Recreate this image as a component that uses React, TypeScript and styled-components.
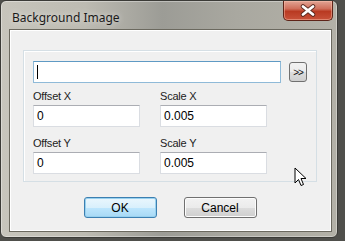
import React from 'react';
import styled, { createGlobalStyle } from 'styled-components';

const GlobalStyle = createGlobalStyle`
  html, body {
    margin: 0;
    padding: 0;
    background: #4f4f4b;
  }
`;

const Desktop = styled.div`
  position: relative;
  width: 345px;
  height: 241px;
  overflow: hidden;
  background: #4f4f4b;
`;

const Window = styled.div`
  display: flex;
  flex-direction: column;
  width: 338px;
  height: 238px;
  box-sizing: border-box;
  border: 1px solid #3b3b37;
  border-radius: 6px;
  background: linear-gradient(
    90deg,
    #c7c5bc 0%,
    #bdbbb2 25%,
    #9c9c96 48%,
    #a9a8a0 70%,
    #b3b1a7 100%
  );
  box-shadow: inset 0 0 0 1px rgba(255, 255, 255, 0.35);
`;

const TitleBar = styled.div`
  display: flex;
  justify-content: space-between;
  height: 30px;
  padding: 0 4px 0 11px;
`;

const Title = styled.span`
  align-self: center;
  margin-top: 2px;
  font-family: 'Noto Sans', sans-serif;
  font-size: 12px;
  color: #1a1a1a;
  text-shadow: 0 0 6px rgba(255, 255, 255, 0.7);
`;

const CloseButton = styled.div`
  display: flex;
  align-items: center;
  justify-content: center;
  width: 50px;
  height: 20px;
  box-sizing: border-box;
  border: 1px solid #5e2418;
  border-top: none;
  border-radius: 0 0 5px 5px;
  background: linear-gradient(180deg, #e2a494 0%, #d0705c 40%, #b93a22 55%, #c8523a 100%);
  box-shadow: inset 0 0 0 1px rgba(255, 200, 180, 0.45);
`;

const Body = styled.div`
  flex: 1;
  display: flex;
  padding: 0 7px 7px 10px;
`;

const Client = styled.div`
  flex: 1;
  display: flex;
  flex-direction: column;
  padding: 19px 13px 11px 12px;
  background: #f0f0f0;
  box-shadow: 0 0 0 1px #ffffff, 0 0 0 2px #6b695f;
`;

const Group = styled.div`
  height: 132px;
  box-sizing: border-box;
  padding: 10px 9px 7px 9px;
  border: 1px solid #d5dfe5;
  box-shadow: inset 1px 1px 0 #ffffff;
`;

const PathRow = styled.div`
  display: flex;
  align-items: center;
  gap: 8px;
`;

const TextBox = styled.div<{ $width: number; $focused?: boolean }>`
  display: flex;
  align-items: center;
  width: ${(p) => p.$width}px;
  height: 22px;
  box-sizing: border-box;
  padding-left: 3px;
  background: #ffffff;
  border: 1px solid ${(p) => (p.$focused ? '#8fbad8' : '#dadde2')};
  border-top-color: ${(p) => (p.$focused ? '#5f9ac4' : '#abadb3')};
  font-family: 'Liberation Sans', Arial, sans-serif;
  font-size: 12px;
  color: #000;
`;

const Caret = styled.span`
  width: 1px;
  height: 14px;
  background: #000;
`;

const Browse = styled.div`
  display: flex;
  align-items: center;
  justify-content: center;
  width: 18px;
  height: 20px;
  box-sizing: border-box;
  border: 1px solid #707070;
  border-radius: 3px;
  background: linear-gradient(180deg, #f2f2f2 0%, #ebebeb 50%, #dddddd 51%, #cfcfcf 100%);
  font-family: 'Liberation Sans', Arial, sans-serif;
  font-size: 10px;
  letter-spacing: -1px;
  color: #111;
`;

const Fields = styled.div`
  display: grid;
  grid-template-columns: 107px 107px;
  column-gap: 20px;
  row-gap: 10px;
  margin-top: 7px;
`;

const Field = styled.div`
  display: flex;
  flex-direction: column;
  gap: 2px;
`;

const Label = styled.span`
  height: 13px;
  line-height: 13px;
  font-family: 'Liberation Sans', Arial, sans-serif;
  font-size: 11px;
  letter-spacing: -0.2px;
  color: #222;
`;

const ButtonRow = styled.div`
  display: flex;
  justify-content: center;
  gap: 27px;
  margin-top: 15px;
`;

const Button = styled.div<{ $primary?: boolean }>`
  display: flex;
  align-items: center;
  justify-content: center;
  width: 73px;
  height: 21px;
  box-sizing: border-box;
  border: 1px solid ${(p) => (p.$primary ? '#3c7fb1' : '#707070')};
  border-radius: 3px;
  background: ${(p) =>
    p.$primary
      ? 'linear-gradient(180deg, #eaf6fd 0%, #d9f0fc 50%, #bee6fd 51%, #a7d9f5 100%)'
      : 'linear-gradient(180deg, #f2f2f2 0%, #ebebeb 50%, #dddddd 51%, #cfcfcf 100%)'};
  box-shadow: inset 0 0 0 1px ${(p) => (p.$primary ? '#98d1ef' : '#fcfcfc')};
  font-family: 'Liberation Sans', Arial, sans-serif;
  font-size: 12px;
  color: #000;
`;

const Pointer = styled.svg`
  position: absolute;
  left: 294px;
  top: 167px;
`;

const fields = [
  { label: 'Offset X', value: '0' },
  { label: 'Scale X', value: '0.005' },
  { label: 'Offset Y', value: '0' },
  { label: 'Scale Y', value: '0.005' },
];

export default function App() {
  return (
    <>
      <GlobalStyle />
      <Desktop>
        <Window>
          <TitleBar>
            <Title>Background Image</Title>
            <CloseButton>
              <svg width="18" height="13" viewBox="0 0 18 13">
                <path d="M4 2.5 L14 10.5 M14 2.5 L4 10.5" stroke="#5a2a20" strokeWidth="4.5" strokeLinecap="round" />
                <path d="M4 2.5 L14 10.5 M14 2.5 L4 10.5" stroke="#ffffff" strokeWidth="2.8" strokeLinecap="round" />
              </svg>
            </CloseButton>
          </TitleBar>
          <Body>
            <Client>
              <Group>
                <PathRow>
                  <TextBox $width={248} $focused>
                    <Caret />
                  </TextBox>
                  <Browse>&gt;&gt;</Browse>
                </PathRow>
                <Fields>
                  {fields.map((f) => (
                    <Field key={f.label}>
                      <Label>{f.label}</Label>
                      <TextBox $width={107}>{f.value}</TextBox>
                    </Field>
                  ))}
                </Fields>
              </Group>
              <ButtonRow>
                <Button $primary>OK</Button>
                <Button>Cancel</Button>
              </ButtonRow>
            </Client>
          </Body>
        </Window>
        <Pointer width="13" height="20" viewBox="0 0 13 20">
          <path
            d="M1 1 L1 16 L4.5 12.5 L7 18.5 L9.5 17.5 L7 11.5 L12 11.5 Z"
            fill="#ffffff"
            stroke="#000000"
            strokeWidth="1"
            strokeLinejoin="round"
          />
        </Pointer>
      </Desktop>
    </>
  );
}
